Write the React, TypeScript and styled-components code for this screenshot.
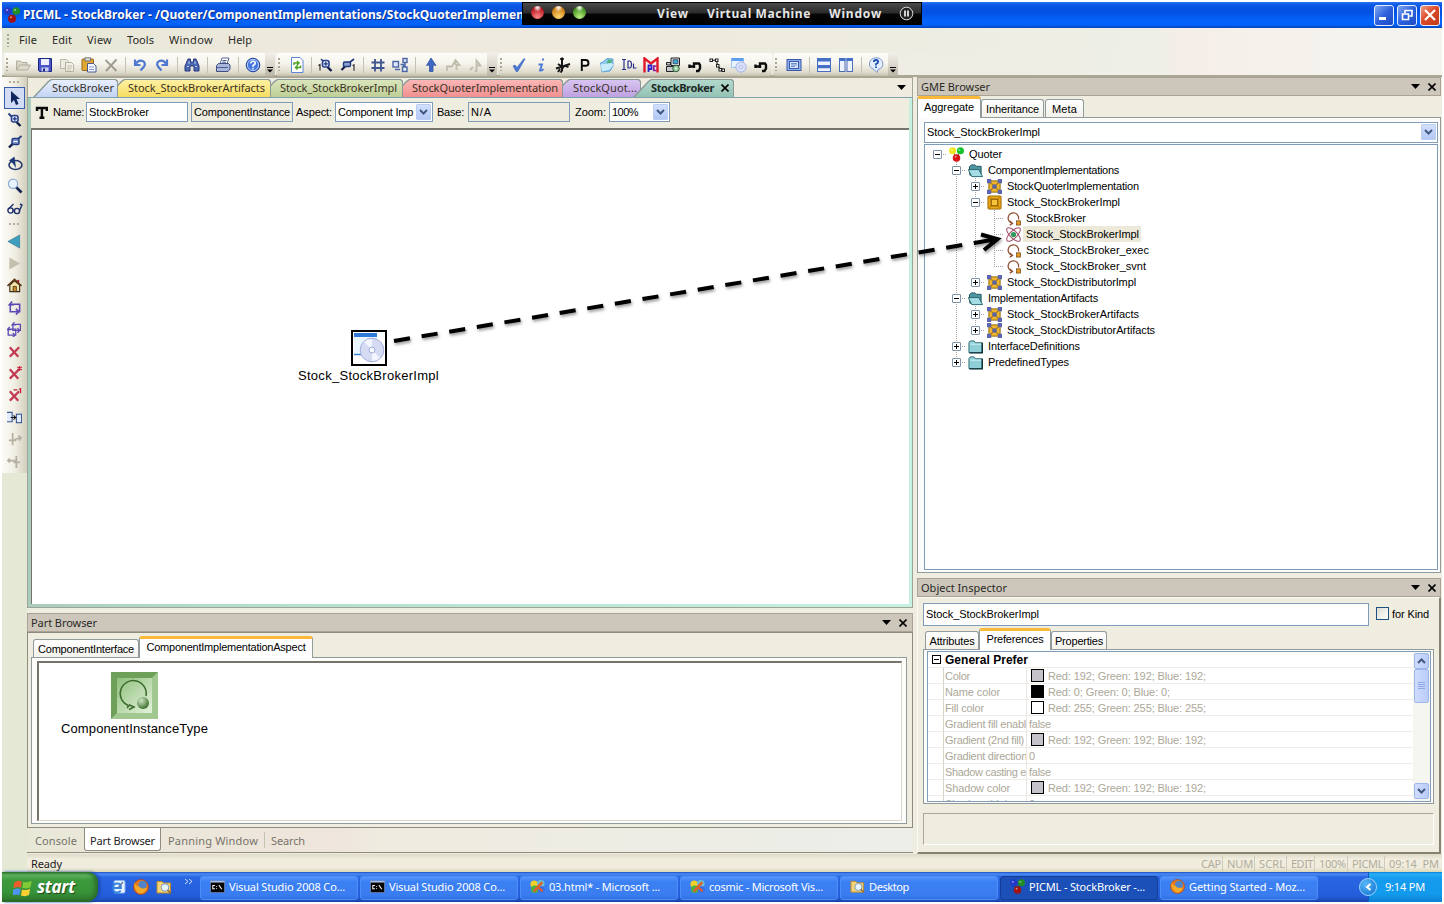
import React, { useLayoutEffect, useRef } from 'react';
import styled, { createGlobalStyle, css } from 'styled-components';

const tahoma = `"Noto Sans", "Open Sans", sans-serif`;
const sans = `"Liberation Sans", Arial, sans-serif`;

const Global = createGlobalStyle`
  * { box-sizing: border-box; }
  body { margin: 0; background: #fff; font: 11px ${tahoma}; color: #1a1a1a; }
  svg { display: block; flex: none; }
`;

/* ---------- text ---------- */

const LabelSpan = styled.span<{ $font?: string; $size?: number; $bold?: boolean; $color?: string }>`
  display: inline-block;
  flex: none;
  white-space: pre;
  line-height: 16px;
  font-family: ${p => p.$font || tahoma};
  font-size: ${p => p.$size || 11}px;
  font-weight: ${p => (p.$bold ? 700 : 400)};
  color: ${p => p.$color || 'inherit'};
`;

type LabelProps = { w?: number; font?: string; size?: number; bold?: boolean; color?: string; children: string };

function Label({ w, font, size, bold, color, children }: LabelProps) {
  const ref = useRef<HTMLSpanElement>(null);
  useLayoutEffect(() => {
    const el = ref.current;
    if (!el || !w) return;
    el.style.letterSpacing = '0px';
    const natural = el.getBoundingClientRect().width;
    el.style.letterSpacing = `${(w - natural) / children.length}px`;
  }, [w, children]);
  return (
    <LabelSpan ref={ref} $font={font} $size={size} $bold={bold} $color={color}>{children}</LabelSpan>
  );
}

const Sys = (p: LabelProps) => <Label font={sans} size={11} color="#000" {...p} />;

/* ---------- icons ---------- */

const zoomGlyph = (plus: boolean) => (
  <>
    <path d="M9.5 10l4 4" stroke="#0f1a45" strokeWidth="2.4" />
    <rect x="4.5" y="3.5" width="6.5" height="6.5" rx="2" fill="#dfe9ff" stroke="#2a3f8a" strokeWidth="1.6" />
    <path d={plus ? 'M5.8 6.8h4M7.8 4.8v4' : 'M5.8 6.8h4'} stroke="#20397f" strokeWidth="1.3" />
  </>
);
const cross = (c: string) => <path d="M3 3.5l9 10M13 3.5L3 13.5" stroke={c} strokeWidth="2.4" />;
const trio = (a: string, b: string, c: string) => (
  <>
    <path d="M3 3l5 8 5-8" stroke="#333" fill="none" />
    <circle cx="3.8" cy="4" r="3.8" fill={a} /><circle cx="12.2" cy="4" r="3.8" fill={b} />
    <circle cx="8" cy="11.8" r="4" fill={c} />
    <circle cx="3" cy="3" r="1" fill="#fff8" /><circle cx="11" cy="3" r="1" fill="#fff8" /><circle cx="7" cy="10.3" r="1" fill="#fff8" />
  </>
);
const loop = <path d="M5 4.5h8.5v8H10M11 12.5H3.5V5M5.5 1.5l-3 3.5h5M9.5 9.5l3 3-3 3" fill="none" stroke="#5a47b4" strokeWidth="1.7" />;

const ICONS: Record<string, React.ReactNode> = {
  app: trio('#2338c8', '#1f8f25', '#a01212'),
  quoter: trio('#f1e522', '#18c22f', '#d81414'),
  open: <path d="M1.5 13V4h4l1.5 1.5H12V8M1.5 13L4.5 8H15.5L12.5 13z" fill="#dcd9cb" stroke="#b1ad9c" />,
  save: <><path d="M1.5 1.5h13v13h-12l-1-1z" fill="#4b55c8" stroke="#1c2781" /><path d="M4 2h8v6H4z" fill="#eef1fd" /><path d="M4.5 10.5h7v4h-7z" fill="#c6cdf4" /><path d="M6 11.5h2v3H6z" fill="#1c2781" /></>,
  copy: <><path d="M1.5 2.5h6l2 2v7h-8z" fill="#eceade" stroke="#bcb8a7" /><path d="M6.5 5.5h6l2 2v7h-8z" fill="#f1efe6" stroke="#b5b19f" /><path d="M8 9h5M8 11h5M8 13h4" stroke="#c5c1b0" /></>,
  paste: <><rect x="1" y="2" width="11.5" height="11.5" rx="1" fill="#e2a832" stroke="#93661a" /><rect x="4" y=".8" width="5.5" height="3.2" fill="#d8d8d8" stroke="#666" strokeWidth=".8" /><path d="M6.5 6.5h6l2.5 2.5v6h-8.5z" fill="#f6f8ff" stroke="#4b5c94" /><path d="M8 10h5M8 12.5h5" stroke="#8b9ac9" /></>,
  del: <path d="M2.5 3l11 11M13.5 2.5L3 14" stroke="#9f9c8e" strokeWidth="1.9" />,
  undo: <path d="M3 2.5v5.5h5.5M3.5 7.5Q6 3 10 3.8Q14.5 5.5 12 9.5L8.5 13.5" fill="none" stroke="#4f78d0" strokeWidth="2.2" />,
  redo: <path d="M13 2.5v5.5H7.500M12.5 7.5Q10 3 6 3.8Q1.5 5.5 4 9.5L7.5 13.5" fill="none" stroke="#4f78d0" strokeWidth="2.2" />,
  find: <><path d="M4 2h2.5v3h3V2H12l3 7v5h-5V9H6v5H1V9z" fill="#4a68b4" stroke="#26397a" /><path d="M3 9.5h2M11 9.5h2M5 4v3M11 4v3" stroke="#b9caef" /></>,
  print: <><path d="M5 7l2-6h7l-2 6" fill="#fff" stroke="#56669a" /><path d="M1.5 8.5l2-2h10l1.5 1.5v4l-2 2.5h-11.5z" fill="#a9b6dc" stroke="#3f4e80" /><path d="M2 10.5h11M7.5 3.5h4M7 5.2h4" stroke="#4a5b92" /></>,
  help: <><circle cx="8" cy="8" r="6.8" fill="#4578de" stroke="#1e4396" /><circle cx="8" cy="8" r="5.6" fill="none" stroke="#b9d0ff" /><path d="M5.8 6.5Q6 4.3 8 4.3t2.2 1.9Q10.2 7.5 8 8.5V9.7M8 10.8v1.5" fill="none" stroke="#fff" strokeWidth="1.6" /></>,
  refresh: <><path d="M2.5.5h8.5l3 3v12H2.5z" fill="#fff" stroke="#5d86d6" /><path d="M5 8V6h4M8 4l2 2-2 2M11.5 8.5v2H7M8.5 8.5l-2 2 2 2" fill="none" stroke="#4ea524" strokeWidth="1.5" /></>,
  zin1: <><path d="M.5 8.5L2 7.5v6" fill="none" stroke="#222" strokeWidth="1.1" /><path d="M3 2l2 2" stroke="#20397f" strokeWidth="1.6" />{zoomGlyph(true)}</>,
  zout1: <><path d="M1.5 13l4-4" stroke="#0f1a45" strokeWidth="2.2" /><rect x="3.5" y="5" width="7" height="4.5" rx="1" fill="#8fa0d0" stroke="#20397f" strokeWidth="1.4" /><path d="M9.5 5.5L14 2" stroke="#20397f" strokeWidth="1.6" /><path d="M12.5 8.5L14 7.8v6" fill="none" stroke="#222" strokeWidth="1.1" /></>,
  hash: <path d="M5 2v12.5M11 2v12.5M1.5 5.5h13M1.5 11h13" stroke="#3f5590" strokeWidth="1.8" />,
  tree: <g fill="#dfe7fa" stroke="#4a64a6" strokeWidth="1.4"><rect x="1" y="4.5" width="5.5" height="5.5" /><rect x="11" y="1.5" width="4" height="4" /><rect x="10.5" y="10" width="4.5" height="4.5" /><path d="M3 12.5h5M8.5 7.5h3v2.5M13 6v4" fill="none" /></g>,
  up: <path d="M8 1l5 7.5-3-.5v6.5H6.500V8l-3 .5z" fill="#3f67c6" stroke="#274793" strokeWidth=".7" />,
  grey1: <path d="M2 14v-4.5h5l3.5-6.5 4 5h-3v5M10.5 3v5" fill="none" stroke="#c1bdac" strokeWidth="1.8" />,
  grey2: <path d="M3 13l3-3M8 14h1.5V3.5l4 5h-3" fill="none" stroke="#c1bdac" strokeWidth="1.8" />,
  check: <path d="M2 9l2-1 2 2.5L13 1.5l1 .5L6.8 14.5H5z" fill="#4a78d4" stroke="#3058b5" strokeWidth=".5" />,
  info: <path d="M10 1.5v2M5.5 7.5H9L7 13.5q2 .5 3.5-1.5" fill="none" stroke="#4a78d4" strokeWidth="1.9" />,
  axis: <><path d="M7 .5v13M1 11.5l5-1.5 9-3M3 7l6 4M9.5 8.5l4 1.5M5 12l-2 3M7.5 13l-2 2.5" stroke="#161616" strokeWidth="2" /><path d="M5 2h4" stroke="#161616" strokeWidth="1.6" /></>,
  p: <path d="M4.8 14V3h3.7q3 0 3 2.9t-3 2.9H5" fill="none" stroke="#0a0a0a" strokeWidth="1.9" />,
  folderGlobe: <><path d="M1.5 6l3-1.5L8 1.5l6 .5v7l-3 5-8 1z" fill="#8fc8f0" stroke="#4e97d0" strokeWidth=".8" /><path d="M9 2.5l4 .5-.5 3-5 1z" fill="#4fb47a" /><path d="M1.5 7.5l11-1.5 2 2-4 4.5-7.5 2z" fill="#c8ecfb" /></>,
  idl: <path d="M1 2.5h4M3 2.5v10M1 12.5h4M7 4v7h1.5q2 0 2-3.5T8.5 4zM12.5 6.5V11H15.5" fill="none" stroke="#2a2f8a" strokeWidth="1.2" />,
  mpc: <><path d="M1.5 15.5V1.5L8 6.5l6.5-5v14" fill="none" stroke="#e01828" strokeWidth="2.4" /><path d="M5.5 15V8.5h3v3.5H6" fill="none" stroke="#3020c8" strokeWidth="1.8" /><path d="M13.5 9h-2.700v4.5h2.700" fill="none" stroke="#8a1a9a" strokeWidth="1.6" /></>,
  pc: <><path d="M6 1h8.5v7.5H6z" fill="#dfe6ee" stroke="#222" /><path d="M8 2.7h5v4H8z" fill="#3fa6d8" stroke="#223" strokeWidth=".6" /><path d="M1.5 9.5h7v5h-7zM1.5 5.5h4v2.5h-4z" fill="#c4c9cf" stroke="#222" /><circle cx="11" cy="11.5" r="3.3" fill="#93cf9c" stroke="#3c5d42" /><circle cx="11" cy="11.5" r="1" fill="#fff" /></>,
  hook: <path d="M2.5 7.5v3.5M2 9.5h4.5M7 11V6.5h5l1 1.5v3.5l-1.5 2.5H9" stroke="#0c0c0c" strokeWidth="2.4" fill="none" />,
  nodes: <><path d="M2.5 3.5l5-.5 1 6 3 3h3" fill="none" stroke="#222" strokeWidth="1.2" /><g fill="#fff" stroke="#222"><rect x="1" y="2" width="2.5" height="2.5" /><rect x="6.5" y="2" width="2.5" height="2.5" /><rect x="7.5" y="7.5" width="2.5" height="2.5" /><rect x="10" y="11.5" width="2.5" height="2.5" /><rect x="13" y="12" width="2.5" height="2.5" /></g></>,
  disc: <><path d="M.5 1.5h12v9H.5z" fill="#eaf4ff" stroke="#9cc5f2" /><path d="M.5 1h12v3H.5z" fill="#5c9ff0" /><circle cx="10" cy="10" r="5.2" fill="#d8dffa" stroke="#a9b7e6" /><circle cx="10" cy="10" r="1.5" fill="#fff" stroke="#a9b7e6" /></>,
  full: <><rect x="1" y="2.5" width="14" height="11" fill="#8fb0ee" stroke="#3a5aa8" /><rect x="3.5" y="4.5" width="9" height="7" fill="#dbe6fd" stroke="#3a5aa8" /><path d="M5 6.5h6M5 8h6M5 9.5h4" stroke="#5378c4" strokeWidth=".8" /></>,
  hsplit: <><rect x="1.5" y="1.5" width="13" height="13" fill="#eef3fe" stroke="#4a6cbc" /><path d="M1 1h14v3.5H1zM1 8h14v3.2H1z" fill="#4470c8" /></>,
  vsplit: <><rect x="1.5" y="1.5" width="5.5" height="13" fill="#eef3fe" stroke="#4a6cbc" /><rect x="9" y="1.5" width="5.5" height="13" fill="#eef3fe" stroke="#4a6cbc" /><path d="M1 1h6.5v3H1zM8.5 1H15v3H8.5z" fill="#4470c8" /></>,
  about: <><path d="M8 .8a7 6 0 0 1 2 11.700L9 15.5 6 12.4A7 6 0 0 1 8 .8z" fill="#e4eefe" stroke="#7b98cd" /><path d="M5.8 5Q6 3 8 3t2.2 1.8Q10.2 6 8 7V8.5M8 9.5V11" fill="none" stroke="#1a4fb0" strokeWidth="1.8" /></>,
  pointer: <path d="M4 1l9 8H9.5l2 5-2.5 1-2-5L4 13z" fill="#11255f" />,
  zin: <><path d="M1.5 1.5l3 3" stroke="#20397f" strokeWidth="1.8" />{zoomGlyph(true)}</>,
  zout: <><path d="M2 13.5l4-4" stroke="#0f1a45" strokeWidth="2.4" /><rect x="5" y="4.5" width="7" height="6" rx="1.5" fill="#7d93cf" stroke="#20397f" strokeWidth="1.4" /><path d="M6.5 7.5h4" stroke="#fff" /><path d="M11 5l3.5-3" stroke="#20397f" strokeWidth="1.8" /></>,
  orbit: <><ellipse cx="8.5" cy="9" rx="6.5" ry="4.5" fill="none" stroke="#27386e" strokeWidth="1.6" /><path d="M2 4.5L7.5.5 9 12 5.5 7z" fill="#1b3a78" /></>,
  lens: <><path d="M9 9l5.5 5.5" stroke="#14224f" strokeWidth="2.6" /><circle cx="6" cy="5.8" r="4.6" fill="#e9f3ff" stroke="#8fa9d2" strokeWidth="1.2" /></>,
  glasses: <g fill="none" stroke="#1c2d6b" strokeWidth="1.4"><circle cx="3.5" cy="10.5" r="2.6" /><circle cx="10" cy="11" r="2.6" /><path d="M1.5 9L6.5 4M12.5 10.5L15 5l-2-1M6 10.5h1.5" /></g>,
  back: <path d="M1 8l12.5-7v14z" fill="#3f9dbd" stroke="#2b6f8a" strokeWidth=".6" />,
  fwd: <path d="M2.5 1.5L14 8 2.5 14.5z" fill="#c3c0ae" />,
  home: <><path d="M3 7.5v7h10.5v-7L8 3z" fill="#f1e2a8" stroke="#3a2a18" strokeWidth="1.2" /><path d="M.5 8.5L8 1.5l7.5 7" fill="none" stroke="#5b3a17" strokeWidth="1.8" /><path d="M12 2v3" stroke="#a01c1c" strokeWidth="2" /><path d="M6.5 9h3.5v5.5H6.5z" fill="#c7872b" stroke="#3a2a18" strokeWidth=".8" /></>,
  loop,
  loop2: <><g transform="translate(3.5 -1) scale(.8)">{loop}</g><g transform="translate(-1.5 4) scale(.8)">{loop}</g></>,
  x: cross('#c23a52'),
  xstar: <>{cross('#c23a52')}<path d="M13.5 0v5M11 1l5 3M16 1l-5 3" stroke="#c8203c" strokeWidth="1.2" /></>,
  xone: <>{cross('#c23a52')}<path d="M7 2h4M13 1.5L14.5.5v5" stroke="#c8203c" fill="none" strokeWidth="1.3" /></>,
  link: <g fill="#e3ecfc" stroke="#3c5a94" strokeWidth="1.2"><path d="M0 2.5h5.5v10H0" /><rect x="10" y="4.5" width="5.5" height="9" /><path d="M4 8h5M7 5.8L9.2 8 7 10.2" fill="none" stroke="#111" /></g>,
  g3: <path d="M6 1v13M2 9h8M8 8l7-2M12 4l3 2-2 3" fill="none" stroke="#b4b1a2" strokeWidth="1.9" />,
  g4: <path d="M10 2v13M7 9h7M1 7h8M3 5L1 7l2 2" fill="none" stroke="#b4b1a2" strokeWidth="1.9" />,
  folderOpen: <><path d="M2 13L1.5 4l2-2h4l1.5 1.5h5V12z" fill="#4f96a2" stroke="#1f5660" /><path d="M.3 7h11.2l4 7.5H4z" fill="#a4dde4" stroke="#24626c" /></>,
  folder: <><path d="M1 4l1.5-2h4L8 4h7v10.5H1z" fill="#8fd0d8" stroke="#2a6670" /><path d="M15.3 4v10.8H1.500" fill="none" stroke="#0d3038" strokeWidth="1.5" /><path d="M2 5.5h12" stroke="#d4f5f8" /></>,
  asm: <><rect x="2" y="2" width="12" height="12" fill="#efb52c" stroke="#8d6511" /><path d="M3 3l10 10M13 3L3 13" stroke="#a67a1c" strokeWidth="1.2" /><circle cx="8" cy="8" r="2.5" fill="#5a62a8" /><g fill="#5c65b0"><rect x="0" y="0" width="4.5" height="4.5" /><rect x="11.5" y="0" width="4.5" height="4.5" /><rect x="0" y="11.5" width="4.5" height="4.5" /><rect x="11.5" y="11.5" width="4.5" height="4.5" /></g></>,
  box: <><rect x="1" y="1" width="14" height="14" rx="1" fill="#eba713" stroke="#94650a" /><path d="M1.5 1.5l4 4M14.5 1.5l-4 4M1.5 14.5l4-4M14.5 14.5l-4-4" stroke="#b57c0c" /><rect x="4.5" y="4.5" width="7" height="7" fill="#f8c33a" stroke="#8a5c08" strokeWidth="1.3" /></>,
  inst: <><path d="M6.5 13A5.6 5.6 0 1 1 13.3 9M4 10.5l3 2.7-3 2" fill="none" stroke="#8a4a2a" strokeWidth="1.3" /><rect x="11.3" y="10.5" width="4.2" height="4.5" fill="#e8981a" stroke="#5e3a08" strokeWidth=".7" /></>,
  atom: <><g fill="none" stroke="#a0506a" strokeWidth="1.1"><ellipse cx="8" cy="8" rx="9.5" ry="3.8" transform="rotate(45 8 8)" /><ellipse cx="8" cy="8" rx="9.5" ry="3.8" transform="rotate(-45 8 8)" /></g><circle cx="8" cy="8" r="2.8" fill="#2e9a5c" /></>,
  ie: <><rect x="4" y="1.5" width="11" height="12.5" rx="1.5" fill="#eaf3ff" stroke="#8ab4f0" /><path d="M3 9h8q0-4.5-4-4.5T3 9t4 4.5q2.5 0 3.7-2" fill="none" stroke="#3384e0" strokeWidth="1.8" /><path d="M8 9l5-6" stroke="#5a7aa8" strokeWidth="1.3" /></>,
  fox: <><circle cx="8" cy="8" r="7.5" fill="#e8781c" stroke="#a9400a" strokeWidth=".6" /><circle cx="9.5" cy="6" r="4.2" fill="#4f84c8" /><path d="M1 3Q3 8 6 7 7 10.5 14 9 12 14 8 14.5 1.5 14 1 3z" fill="#f4a929" /></>,
  search: <><path d="M1 2.5h5l1.5 1.5h7V14H1z" fill="#f4d379" stroke="#b98a2b" /><circle cx="9" cy="8.5" r="3.8" fill="#e8f5ff" stroke="#7898b8" /><path d="M11.5 11l3.5 3.5" stroke="#8b6a3a" strokeWidth="1.6" /></>,
  cmd: <><rect x=".5" y="2" width="15" height="12.5" fill="#050505" stroke="#8fa2c8" strokeWidth=".6" /><path d="M.5 2h15v1.8H.5z" fill="#a9bfe8" /><path d="M5.2 7H3v3.5h2.2M7 7.5v.8M7 9.8v.8M9.5 6.5l3 4.5" stroke="#fff" fill="none" strokeWidth="1.1" /></>,
  vs: <><circle cx="4.5" cy="5.5" r="4" fill="#f2cf2a" /><circle cx="11.5" cy="5" r="4" fill="#6cc0d4" /><circle cx="5" cy="11" r="4" fill="#4cb045" /><circle cx="12" cy="11" r="3.5" fill="#3c6ee4" /><path d="M3 12.5L12 2.5l2 2-9 9.500zM8 7l6 5-1 2-6-5z" fill="#e0602a" /></>,
  windows: <g transform="skewY(-5) translate(0 1)"><path d="M1 3.5Q4 1.5 7 3.2L6.3 8Q3.5 6.5.3 8z" fill="#ee5a2a" /><path d="M8.2 3.5Q11 5 15 3.3L14 8.5Q11 9.8 7.3 8.2z" fill="#7fcb35" /><path d="M.2 9.2Q3.2 7.8 6 9.2L5.2 14Q2.5 12.5-.8 14z" fill="#4e95f2" /><path d="M7.2 9.6Q10.5 11 13.7 9.6L12.8 14.6Q9.5 16 6.4 14.3z" fill="#f9cf33" /></g>,
  bigT: <path d="M2.5 6V2.500h12V6M8.5 3v12M5.5 14.5h6" fill="none" stroke="#0a0a0a" strokeWidth="3" />,
};

const Icon = ({ name, size = 16 }: { name: string; size?: number }) => (
  <svg width={size} height={size} viewBox="0 0 16 16">{ICONS[name]}</svg>
);

/* ---------- window frame ---------- */

const Desktop = styled.div`
  position: relative;
  width: 1444px;
  height: 904px;
  padding: 2px;
  background: #fff;
  overflow: hidden;
`;
const Win = styled.div`
  width: 1440px;
  height: 900px;
  display: flex;
  flex-direction: column;
  background: #efece0;
`;
const TitleBar = styled.div`
  position: relative;
  height: 26px;
  flex: none;
  display: flex;
  align-items: center;
  padding: 0 2px 0 2px;
  gap: 3px;
  color: #fff;
  background: linear-gradient(#2a74ee 0, #0b58e6 3px, #0450e0 9px, #0463fb 19px, #0461f8 23px, #0344b8 26px);
  text-shadow: 1px 1px 0 #10308a;
`;
const Spring = styled.div`flex: 1;`;
const WinButton = styled.div<{ $close?: boolean }>`
  width: 20px;
  height: 21px;
  border: 1px solid #e6eefc;
  border-radius: 3px;
  display: flex;
  align-items: center;
  justify-content: center;
  background: ${p => (p.$close ? 'linear-gradient(135deg,#f0a08a,#dc4a28 45%,#c03a1a)' : 'linear-gradient(135deg,#82a9f4,#2c60dc 50%,#1c4cc4)')};
`;
const MacBar = styled.div`
  position: absolute;
  left: 520px;
  top: 0;
  width: 400px;
  height: 23px;
  display: flex;
  align-items: center;
  padding: 0 7px 0 8px;
  border: 1px solid #000;
  background: linear-gradient(#4a4a4a 0, #2b2b2b 10px, #060606 11px, #000 100%);
  text-shadow: none;
`;
const Light = styled.div<{ $c: string; $d: string }>`
  width: 13px;
  height: 13px;
  margin: 0 8px 2px 0;
  border-radius: 50%;
  background: radial-gradient(circle at 50% 12%, #fff 0, #fff8 16%, transparent 32%),
    radial-gradient(circle at 50% 85%, ${p => p.$c}, ${p => p.$d} 75%);
`;
const MacMenus = styled.div`
  display: flex;
  gap: 18px;
  margin: 0 auto 0 62px;
  padding-left: 1px;
`;

const MenuBar = styled.div`
  height: 24px;
  flex: none;
  display: flex;
  align-items: center;
  padding-left: 3px;
  color: #2b2a28;
  background: linear-gradient(90deg, #e6e8d6, #efe9de 24%, #eeebde 50%, #eeefe7 80%, #f5eee8 82%, #f5f3ee 93%);
`;
const Grip = styled.div<{ $w: number }>`
  width: ${p => p.$w}px;
  height: 13px;
  flex: none;
  background: repeating-linear-gradient(#aaa692 0 2px, transparent 2px 4px) 2px 0 / 2px 100% no-repeat;
`;
const MenuItem = styled.div<{ $gap: number }>`margin-left: ${p => p.$gap}px;`;

const ToolRow = styled.div`
  height: 25px;
  flex: none;
  display: flex;
  background: linear-gradient(90deg, #efede3 60%, #eeefe7 80%, #f5eee8 82%, #f5f3ee 93%);
  border-bottom: 2px solid #aaa795;
  padding: 1px 0 0 2px;
`;
const Band = styled.div`
  display: flex;
  align-items: center;
  height: 23px;
  border-radius: 3px;
  background: linear-gradient(#fdfcf9, #f6f4ec 45%, #dedacb 85%, #c3bfad);
  margin-right: 1px;
`;
const Cell = styled.div`
  width: 22px;
  height: 22px;
  flex: none;
  display: flex;
  align-items: center;
  justify-content: center;
`;
const Sep = styled.div<{ $w: number }>`
  width: ${p => p.$w}px;
  height: 16px;
  flex: none;
  background: linear-gradient(#c6c2b2, #c6c2b2) center / 1px 100% no-repeat;
`;
const Overflow = styled.div`
  width: 10px;
  height: 23px;
  margin-left: 1px;
  display: flex;
  align-items: flex-end;
  justify-content: center;
  padding-bottom: 3px;
  border-radius: 0 3px 3px 0;
  background: linear-gradient(#f1efe8, #dad7cc 50%, #b9b5a5);
`;
const Chevron = () => (
  <Overflow><svg width="6" height="6"><path d="M0 .5h6" stroke="#000" /><path d="M0 2.5h6l-3 3z" /></svg></Overflow>
);

const BANDS: { grip: number; items: (string | number)[]; more?: boolean }[] = [
  { grip: 8, more: true, items: ['open', 'save', 'copy', 'paste', 'del', 7, 'undo', 'redo', 8, 'find', 9, 'print', 8, 'help'] },
  { grip: 10, more: true, items: ['refresh', 7, 'zin1', 'zout1', 8, 'hash', 'tree', 9, 'up', 'grey1', 'grey2'] },
  { grip: 10, items: ['check', 'info', 'axis', 'p', 'folderGlobe', 'idl', 'mpc', 'pc', 'hook', 'nodes', 'disc', 'hook'] },
  { grip: 10, more: true, items: ['full', 8, 'hsplit', 'vsplit', 8, 'about'] },
];

/* ---------- body ---------- */

const Body = styled.div`
  flex: 1;
  min-height: 0;
  display: flex;
`;
const SideBar = styled.div`
  width: 25px;
  flex: none;
  background: #e5e8d5;
`;
const SideStrip = styled.div`
  display: flex;
  flex-direction: column;
  align-items: center;
  height: 396px;
  background: linear-gradient(90deg, #fcfbf7, #f1efe4 50%, #d3cfbd);
`;
const SideGrip = styled.div<{ $h: number }>`
  width: 11px;
  height: ${p => p.$h}px;
  background: repeating-linear-gradient(90deg, #b3af9c 0 2px, transparent 2px 4px) 0 4px / 100% 2px no-repeat;
`;
const SideCell = styled(Cell)<{ $on?: boolean }>`
  ${p => p.$on && css`
    width: 21px;
    background: #d2ddf5;
    border: 1px solid #3a5fae;
  `}
`;
const SIDE1 = ['pointer', 'zin', 'zout', 'orbit', 'lens', 'glasses'];
const SIDE2 = ['back', 'fwd', 'home', 'loop', 'loop2', 'x', 'xstar', 'xone', 'link', 'g3', 'g4'];

const Main = styled.div`
  width: 886px;
  margin-right: 4px;
  flex: none;
  display: flex;
  flex-direction: column;
`;
const DocTabs = styled.div`
  height: 20px;
  flex: none;
  display: flex;
  align-items: flex-end;
  padding-left: 5px;
  border: 1px solid #a9a595;
  border-bottom: 0;
  background: #efecdf;
`;
const DocTab = styled.div<{ $w: number; $c: string; $c2: string; $z: number; $over: number; $pad: number }>`
  position: relative;
  z-index: ${p => p.$z};
  width: ${p => p.$w}px;
  height: 18px;
  flex: none;
  margin-left: ${p => -p.$over}px;
  padding-left: ${p => p.$pad}px;
  display: flex;
  align-items: center;
  color: #333;
  background: #8a9a98;
  clip-path: polygon(0 100%, 15px 2px, 18px 0, calc(100% - 2px) 0, 100% 2px, 100% 100%);
  &::before {
    content: '';
    position: absolute;
    inset: 0;
    background: linear-gradient(${p => p.$c}, ${p => p.$c2});
    clip-path: polygon(2px 100%, 16px 3px, 19px 1px, calc(100% - 3px) 1px, calc(100% - 1px) 3px, calc(100% - 1px) 100%);
  }
  > * { position: relative; }
`;
const TabClose = styled.div`margin-left: 7px;`;
const DocMenu = styled.div`
  margin-left: auto;
  padding: 0 6px 7px 0;
`;
const Doc = styled.div`
  height: 511px;
  flex: none;
  display: flex;
  flex-direction: column;
  padding: 0 3px 3px;
  border: 1px solid #9da596;
  border-top-color: #7fa3ae;
  background: linear-gradient(90deg, #a9cdbd, #b4dccb 20%, #c6f0e2);
`;
const NameRow = styled.div`
  height: 30px;
  flex: none;
  display: flex;
  align-items: center;
  padding: 0 0 2px 4px;
  background: #efece0;
`;
const Field = styled.div<{ $w: number; $h?: number; $ml?: number; $ro?: boolean }>`
  width: ${p => p.$w}px;
  height: ${p => p.$h || 20}px;
  margin-left: ${p => p.$ml || 0}px;
  flex: none;
  display: flex;
  align-items: center;
  padding-left: 2px;
  padding-bottom: ${p => (p.$h ? 1 : 0)}px;
  border: 1px solid #7f9db9;
  background: ${p => (p.$ro ? '#eeebdf' : '#fff')};
  overflow: hidden;
`;
const Drop = styled.div`
  width: 15px;
  height: calc(100% - 2px);
  margin: 0 1px 0 auto;
  display: flex;
  align-items: center;
  justify-content: center;
  border-radius: 1px;
  background: linear-gradient(#d3e0fd, #b3c8f5);
  border: 1px solid #bccdf3;
`;
const Vee = ({ up }: { up?: boolean }) => (
  <svg width="9" height="6"><path d={up ? 'M1 5l3.5-3.5L8 5' : 'M1 1l3.5 3.5L8 1'} fill="none" stroke="#41587f" strokeWidth="2" /></svg>
);
const Gap = styled.div<{ $w: number }>`width: ${p => p.$w}px; flex: none;`;
const Canvas = styled.div`
  flex: 1;
  position: relative;
  background: #fff;
  border: 1px solid #77756b;
  border-width: 2px 0 0 1px;
`;
const Node = styled.div<{ $x: number; $y: number }>`
  position: absolute;
  left: ${p => p.$x}px;
  top: ${p => p.$y}px;
  display: flex;
  flex-direction: column;
  align-items: center;
  gap: 2px;
`;

/* ---------- dock panels ---------- */

const Caption = styled.div<{ $pr: number }>`
  height: 19px;
  flex: none;
  display: flex;
  align-items: center;
  gap: 8px;
  padding: 0 ${p => p.$pr}px 0 3px;
  border: 1px solid #aaa395;
  background: #cdc7bb;
  color: #2a2926;
`;
const Down = () => <svg width="9" height="5"><path d="M0 0h9L4.5 5z" /></svg>;
const Close = () => (
  <svg width="8" height="8" viewBox="0 0 8 8"><path d="M.5.5l7 7M7.5.5l-7 7" stroke="#000" strokeWidth="1.6" /></svg>
);
const CaptionBar = ({ text, w, pr = 4 }: { text: string; w: number; pr?: number }) => (
  <Caption $pr={pr}><Label w={w}>{text}</Label><Spring /><Down /><Close /></Caption>
);

const TabRow = styled.div<{ $pl: number }>`
  display: flex;
  align-items: flex-end;
  height: 21px;
  flex: none;
  padding-left: ${p => p.$pl}px;
`;
const PageTab = styled.div<{ $w: number; $on?: boolean }>`
  width: ${p => p.$w}px;
  height: ${p => (p.$on ? 22 : 18)}px;
  flex: none;
  display: flex;
  justify-content: center;
  align-items: center;
  border: 1px solid #919b9c;
  border-bottom: 0;
  border-radius: 3px 3px 0 0;
  background: linear-gradient(#fff, #f3f2ec);
  ${p => p.$on && css`
    position: relative;
    margin-bottom: -1px;
    padding-bottom: 3px;
    border-top: 3px solid #fbb93a;
    background: #fff;
  `}
`;

const PartWrap = styled.div`
  display: flex;
  flex-direction: column;
  margin-top: 5px;
`;
const PartBody = styled.div`
  height: 196px;
  flex: none;
  display: flex;
  flex-direction: column;
  padding: 3px 5px 3px 3px;
  border: 1px solid #8f8c7d;
  background: #efece0;
`;
const PartPage = styled.div`
  flex: 1;
  display: flex;
  padding: 3px 4px 2px 5px;
  border: 1px solid #919b9c;
  background: #fcfcfa;
`;
const PartList = styled.div`
  flex: 1;
  position: relative;
  background: #fff;
  border: 2px solid #77756b;
  border-right: 1px solid #d8d5c9;
  border-bottom: 1px solid #d8d5c9;
`;
const BottomTabs = styled.div`
  height: 25px;
  flex: none;
  display: flex;
  align-items: flex-start;
  padding-left: 8px;
  color: #76736a;
  border-bottom: 1px solid #8f8c7d;
  background: linear-gradient(90deg, #e8e8d8, #efe5dc 35%, #eeebdf 40%, #edeeea);
`;
const BottomTab = styled.div<{ $on?: boolean }>`
  height: 23px;
  display: flex;
  align-items: center;
  padding-top: 2px;
  ${p => p.$on && css`
    margin: 0 7px 0 7px;
    padding: 3px 5px 0;
    background: #fff;
    color: #222;
    border: 1px solid #8f8c7d;
    border-top: 0;
    border-radius: 0 0 3px 3px;
  `}
`;
const TabSep = styled(Sep)`margin-top: 4px;`;

const Right = styled.div`
  width: 524px;
  flex: none;
  display: flex;
  flex-direction: column;
`;
const BrowserPage = styled.div`
  height: 456px;
  flex: none;
  display: flex;
  flex-direction: column;
  padding: 4px 2px 2px 6px;
  border: 1px solid #919b9c;
  background: #fcfcfa;
  margin-bottom: 5px;
`;
const Tree = styled.div`
  flex: 1;
  margin-top: 1px;
  padding: 1px 0 0 3px;
  background: #fff;
  border: 1px solid #7f9db9;
`;
const TreeRow = styled.div`
  height: 16px;
  display: flex;
  align-items: center;
`;
const dots = 'repeating-linear-gradient(#a5a5a5 0 1px, transparent 1px 2px)';
const hdots = 'repeating-linear-gradient(90deg, #a5a5a5 0 1px, transparent 1px 2px)';
const Guide = styled.div<{ $v?: 'full' | 'half' | 'none'; $h?: boolean }>`
  width: 19px;
  height: 16px;
  flex: none;
  display: flex;
  align-items: center;
  justify-content: center;
  background-repeat: no-repeat;
  background-image: ${p => (p.$v === 'none' || !p.$v ? 'none' : dots)}, ${p => (p.$h ? hdots : 'none')};
  background-size: 1px ${p => (p.$v === 'half' ? '8px' : '16px')}, 10px 1px;
  background-position: 9px 0, 9px 8px;
`;
const Expander = styled.div`
  width: 9px;
  height: 9px;
  border: 1px solid #7f93a8;
  border-radius: 1px;
  background: #fff;
  display: flex;
  align-items: center;
  justify-content: center;
`;
const PlusMinus = ({ plus }: { plus?: boolean }) => (
  <Expander><svg width="5" height="5"><path d={plus ? 'M0 2.5h5M2.5 0v5' : 'M0 2.5h5'} stroke="#000" /></svg></Expander>
);
const TreeText = styled.div<{ $sel?: boolean }>`
  height: 16px;
  padding: 0 2px 0 3px;
  display: flex;
  background: ${p => (p.$sel ? '#ece9d8' : 'transparent')};
`;

type N = { t: string; w: number; icon: string; lines: string; exp?: '+' | '-'; sel?: boolean };
/* `lines`: one letter for each guide column: s = space, f = passing line, t = branch, e = last branch */
const TREE: N[] = [
  { t: 'Quoter', w: 33, icon: 'quoter', lines: 's', exp: '-' },
  { t: 'ComponentImplementations', w: 131, icon: 'folderOpen', lines: 'st', exp: '-' },
  { t: 'StockQuoterImplementation', w: 132, icon: 'asm', lines: 'sft', exp: '+' },
  { t: 'Stock_StockBrokerImpl', w: 113, icon: 'box', lines: 'sft', exp: '-' },
  { t: 'StockBroker', w: 60, icon: 'inst', lines: 'sfft' },
  { t: 'Stock_StockBrokerImpl', w: 113, icon: 'atom', lines: 'sfft', sel: true },
  { t: 'Stock_StockBroker_exec', w: 123, icon: 'inst', lines: 'sfft' },
  { t: 'Stock_StockBroker_svnt', w: 120, icon: 'inst', lines: 'sffe' },
  { t: 'Stock_StockDistributorImpl', w: 129, icon: 'asm', lines: 'sfe', exp: '+' },
  { t: 'ImplementationArtifacts', w: 110, icon: 'folderOpen', lines: 'st', exp: '-' },
  { t: 'Stock_StockBrokerArtifacts', w: 132, icon: 'asm', lines: 'sft', exp: '+' },
  { t: 'Stock_StockDistributorArtifacts', w: 148, icon: 'asm', lines: 'sfe', exp: '+' },
  { t: 'InterfaceDefinitions', w: 92, icon: 'folder', lines: 'st', exp: '+' },
  { t: 'PredefinedTypes', w: 81, icon: 'folder', lines: 'se', exp: '+' },
];

const Inspector = styled.div`
  flex: 1;
  display: flex;
  flex-direction: column;
  padding: 4px 5px 7px 5px;
  border: 1px solid #fbfaf5;
  border-right: 2px solid #85826f;
  border-bottom: 2px solid #85826f;
`;
const InspectorTop = styled.div`
  display: flex;
  height: 24px;
  align-items: center;
  margin-bottom: 2px;
`;
const CheckBox = styled.div`
  width: 13px;
  height: 13px;
  margin: 0 3px 2px 7px;
  border: 1px solid #1d5180;
  background: linear-gradient(135deg, #dcdcd5, #fff);
`;
const GridPage = styled.div`
  height: 155px;
  width: 511px;
  flex: none;
  padding: 1px 2px 1px 3px;
  border: 1px solid #919b9c;
  background: #fcfcfa;
`;
const Grid = styled.div`
  height: 151px;
  display: flex;
  border: 1px solid #7f9db9;
  background: #fff;
  overflow: hidden;
`;
const GridRows = styled.div`flex: 1; height: 149px; overflow: hidden;`;
const GridRow = styled.div<{ $head?: boolean }>`
  height: 16px;
  display: flex;
  > :first-child { width: 15px; }
  > :nth-child(2) {
    width: ${p => (p.$head ? 101 : 84)}px;
    padding-left: ${p => (p.$head ? 2 : 1)}px;
    border-left: ${p => (p.$head ? 0 : 1)}px solid #d8d4cc;
    border-right: ${p => (p.$head ? 0 : 1)}px solid #ece6e0;
  }
  > :nth-child(3) { flex: 1; }
`;
const GridCell = styled.div`
  flex: none;
  height: 16px;
  display: flex;
  align-items: center;
  padding-left: 2px;
  overflow: hidden;
  border-bottom: 1px solid #f0ebe5;
`;
const Swatch = styled.div<{ $c: string }>`
  width: 13px;
  height: 13px;
  margin: 0 4px 0 2px;
  flex: none;
  border: 1px solid #000;
  background: ${p => p.$c};
`;
const HeadBox = styled.div`
  width: 9px;
  height: 9px;
  margin-left: 2px;
  flex: none;
  border: 1px solid #000;
  background: linear-gradient(#000, #000) center / 5px 1px no-repeat;
`;
const ScrollBar = styled.div`
  width: 17px;
  display: flex;
  flex-direction: column;
  align-items: center;
  padding: 1px 0 2px;
  background: #f6f6f0;
`;
const ScrollButton = styled.div<{ $h: number }>`
  width: 15px;
  height: ${p => p.$h}px;
  flex: none;
  display: flex;
  align-items: center;
  justify-content: center;
  border: 1px solid #9fb6ea;
  border-radius: 2px;
  background: linear-gradient(90deg, #cfdcfd, #b9ccf9);
`;
const PROPS: { n: string; nw: number; v: string; vw: number; c?: string }[] = [
  { n: 'Color', nw: 25, v: 'Red: 192; Green: 192; Blue: 192;', vw: 158, c: '#c5c3c8' },
  { n: 'Name color', nw: 55, v: 'Red: 0; Green: 0; Blue: 0;', vw: 122, c: '#000' },
  { n: 'Fill color', nw: 39, v: 'Red: 255; Green: 255; Blue: 255;', vw: 158, c: '#fff' },
  { n: 'Gradient fill enabl', nw: 81, v: 'false', vw: 22 },
  { n: 'Gradient (2nd fill)', nw: 79, v: 'Red: 192; Green: 192; Blue: 192;', vw: 158, c: '#c5c3c8' },
  { n: 'Gradient direction', nw: 82, v: '0', vw: 6 },
  { n: 'Shadow casting e', nw: 81, v: 'false', vw: 22 },
  { n: 'Shadow color', nw: 65, v: 'Red: 192; Green: 192; Blue: 192;', vw: 158, c: '#c5c3c8' },
  { n: 'Shadow thickn', nw: 71, v: '0', vw: 6 },
];
const HelpBox = styled.div`
  flex: 1;
  margin-top: 9px;
  border: 1px solid #aca899;
  border-right-color: #fff;
  border-bottom-color: #fff;
`;

/* ---------- status and task bars ---------- */

const StatusBar = styled.div`
  height: 18px;
  flex: none;
  display: flex;
  align-items: center;
  padding: 1px 3px 0 29px;
  background: linear-gradient(90deg, #e5e8d5 25px, transparent 25px), linear-gradient(#dedbca, #f1eddf 30%, #efebdd 75%, #dcd9b8);
`;
const StatusItem = styled.div<{ $last?: boolean }>`
  display: flex;
  padding: 0 ${p => (p.$last ? 0 : 1)}px 0 4px;
  border-right: ${p => (p.$last ? 0 : 1)}px solid #d0ccbb;
`;
const STATUS: [string, number][] = [['CAP', 20], ['NUM', 26], ['SCRL', 26], ['EDIT', 22], ['100%', 27], ['PICML', 31], ['09:14  PM', 50]];

const TaskBar = styled.div`
  height: 30px;
  flex: none;
  display: flex;
  align-items: center;
  color: #fff;
  background: linear-gradient(#1f4fc0 0, #4c8df6 2px, #2a66e2 5px, #245edc 22px, #2058cf 26px, #1a45a8 30px);
`;
const Start = styled.div`
  width: 96px;
  height: 30px;
  flex: none;
  display: flex;
  align-items: center;
  gap: 4px;
  padding-left: 11px;
  border-radius: 0 10px 12px 0;
  font-style: italic;
  text-shadow: 1px 1px 1px #1c4a1a;
  background: linear-gradient(#2f7a2f 0, #5fb45f 3px, #3c9a3c 8px, #389338 20px, #2f7d2f 27px, #256325 30px);
  box-shadow: inset -3px 0 4px #2a6b2a, 2px 0 3px #1a46ae;
`;
const Quick = styled.div`
  width: 102px;
  flex: none;
  display: flex;
  gap: 7px;
  padding-left: 12px;
  align-items: center;
`;
const More = styled.svg`margin: 0 0 10px 5px;`;
const Task = styled.div<{ $on?: boolean }>`
  width: 158px;
  height: 24px;
  margin: 1px 2px 0 0;
  flex: none;
  display: flex;
  align-items: center;
  gap: 4px;
  padding: 0 0 2px 9px;
  border-radius: 3px;
  border: 1px solid ${p => (p.$on ? '#153e96' : '#4d8ef8')};
  background: ${p => (p.$on ? '#1b50b8' : 'linear-gradient(#5494fa, #3b80f3 5px, #3a7df0 18px, #3170e2)')};
`;
const Tray = styled.div`
  position: relative;
  width: 74px;
  height: 30px;
  margin-left: auto;
  display: flex;
  align-items: center;
  padding-left: 16px;
  border-left: 1px solid #0d5bb8;
  background: linear-gradient(#0d78d8 0, #28b2f8 2px, #169bee 6px, #129aec 22px, #0e80d4 30px);
`;
const TrayKnob = styled.div`
  position: absolute;
  left: -10px;
  top: 6px;
  width: 18px;
  height: 18px;
  border-radius: 50%;
  border: 1px solid #9fd4fb;
  display: flex;
  align-items: center;
  justify-content: center;
  background: radial-gradient(circle at 35% 30%, #59b8f8, #0b6dd0);
`;
const TASKS: { icon: string; t: string; w: number; on?: boolean }[] = [
  { icon: 'cmd', t: 'Visual Studio 2008 Co...', w: 116 },
  { icon: 'cmd', t: 'Visual Studio 2008 Co...', w: 116 },
  { icon: 'vs', t: '03.html* - Microsoft ...', w: 111 },
  { icon: 'vs', t: 'cosmic - Microsoft Vis...', w: 114 },
  { icon: 'search', t: 'Desktop', w: 40 },
  { icon: 'app', t: 'PICML - StockBroker -...', w: 116, on: true },
  { icon: 'fox', t: 'Getting Started - Moz...', w: 116 },
];

const ArrowLayer = styled.svg`
  position: absolute;
  left: 380px;
  top: 220px;
  filter: drop-shadow(1px 2px 1.5px rgba(0, 0, 0, 0.4));
`;

const DOCS = [
  { t: 'StockBroker', w: 62, tw: 85, over: 0, pad: 19, c: '#eaf1ff', c2: '#c3d4f4' },
  { t: 'Stock_StockBrokerArtifacts', w: 137, tw: 165, over: 12, pad: 22, c: '#fff2a6', c2: '#f7dc62' },
  { t: 'Stock_StockBrokerImpl', w: 117, tw: 144, over: 12, pad: 21, c: '#dbe6bd', c2: '#bfd096' },
  { t: 'StockQuoterImplementation', w: 146, tw: 172, over: 12, pad: 21, c: '#fbb9b8', c2: '#f19090' },
  { t: 'StockQuot...', w: 64, tw: 90, over: 12, pad: 22, c: '#d9c6f2', c2: '#bfa2e2' },
];

function PartPanel() {
  return (
    <PartWrap>
      <CaptionBar text="Part Browser" w={66} pr={5} />
      <PartBody>
        <TabRow $pl={2}>
          <PageTab $w={106}><Sys w={96}>ComponentInterface</Sys></PageTab>
          <PageTab $w={174} $on><Sys w={159}>ComponentImplementationAspect</Sys></PageTab>
        </TabRow>
        <PartPage>
          <PartList>
            <Node $x={22} $y={9}>
              <svg width="47" height="47">
                <defs>
                  <linearGradient id="leaf" x1="0" y1="0" x2="1" y2="1"><stop offset="0" stopColor="#8fc07c" /><stop offset="1" stopColor="#e4f2dc" /></linearGradient>
                  <radialGradient id="ball" cx=".35" cy=".3" r=".8"><stop offset="0" stopColor="#cfe8c2" /><stop offset="1" stopColor="#2c6320" /></radialGradient>
                </defs>
                <rect width="47" height="47" fill="#7fae6c" />
                <path d="M0 0h47L41 6H6v35l-6 6z" fill="#6fa05a" />
                <path d="M47 47H0l6-6h35V6l6-6z" fill="#a2c892" />
                <rect x="6" y="6" width="35" height="35" fill="url(#leaf)" />
                <path d="M17 33.5A13 13 0 1 1 35 24M16 36l2.5-3 4.5 2-5 2.500" fill="none" stroke="#3b6b2d" strokeWidth="1.5" />
                <circle cx="32" cy="31" r="6" fill="url(#ball)" />
              </svg>
              <Label font={sans} size={13} w={147} color="#000">ComponentInstanceType</Label>
            </Node>
          </PartList>
        </PartPage>
      </PartBody>
      <BottomTabs>
        <BottomTab><Label w={42}>Console</Label></BottomTab>
        <BottomTab $on><Label w={65}>Part Browser</Label></BottomTab>
        <BottomTab><Label w={90}>Panning Window</Label></BottomTab>
        <TabSep $w={13} />
        <BottomTab><Label w={34}>Search</Label></BottomTab>
      </BottomTabs>
    </PartWrap>
  );
}

export default function App() {
  return (
    <Desktop>
      <Global />
      <Win>
        <TitleBar>
          <Icon name="app" />
          <Label w={501} size={12} bold>PICML - StockBroker - /Quoter/ComponentImplementations/StockQuoterImplemen</Label>
          <Spring />
          <WinButton><svg width="12" height="12"><path d="M1 9.5h7" stroke="#fff" strokeWidth="3" /></svg></WinButton>
          <WinButton><svg width="12" height="12"><path d="M4 4V1.5h7V7H8.5M1.5 5h6v5.5h-6z" fill="none" stroke="#fff" strokeWidth="1.6" /></svg></WinButton>
          <WinButton $close><svg width="12" height="12"><path d="M1 1l10 10M11 1L1 11" stroke="#fff" strokeWidth="2.2" /></svg></WinButton>
          <MacBar>
            <Light $c="#ff8a8a" $d="#b01018" /><Light $c="#ffd870" $d="#c87810" /><Light $c="#b8f080" $d="#3a8a18" />
            <MacMenus>
              <Label w={32} size={12} bold color="#e6e6e6">View</Label>
              <Label w={104} size={12} bold color="#e6e6e6">Virtual Machine</Label>
              <Label w={53} size={12} bold color="#e6e6e6">Window</Label>
            </MacMenus>
            <svg width="15" height="15"><circle cx="7.5" cy="7.5" r="6.3" fill="#222" stroke="#ddd" /><path d="M6 4.5v6M9 4.5v6" stroke="#fff" strokeWidth="1.6" /></svg>
          </MacBar>
        </TitleBar>

        <MenuBar>
          <Grip $w={8} />
          <MenuItem $gap={6}><Label w={18}>File</Label></MenuItem>
          <MenuItem $gap={15}><Label w={20}>Edit</Label></MenuItem>
          <MenuItem $gap={15}><Label w={25}>View</Label></MenuItem>
          <MenuItem $gap={15}><Label w={27}>Tools</Label></MenuItem>
          <MenuItem $gap={15}><Label w={44}>Window</Label></MenuItem>
          <MenuItem $gap={15}><Label w={24}>Help</Label></MenuItem>
        </MenuBar>

        <ToolRow>
          {BANDS.map((b, i) => (
            <Band key={i}>
              <Grip $w={b.grip} />
              {b.items.map((it, k) => (typeof it === 'number' ? <Sep key={k} $w={it} /> : <Cell key={k}><Icon name={it} /></Cell>))}
              {b.more && <Chevron />}
            </Band>
          ))}
        </ToolRow>

        <Body>
          <SideBar>
            <SideStrip>
              <SideGrip $h={10} />
              {SIDE1.map((n, i) => <SideCell key={n} $on={i === 0}><Icon name={n} /></SideCell>)}
              <SideGrip $h={11} />
              {SIDE2.map(n => <SideCell key={n}><Icon name={n} size={15} /></SideCell>)}
            </SideStrip>
          </SideBar>

          <Main>
            <DocTabs>
              {DOCS.map((d, i) => (
                <DocTab key={d.t} $w={d.tw} $c={d.c} $c2={d.c2} $z={5 - i} $over={d.over} $pad={d.pad}>
                  <Label w={d.w} color="#3a3226">{d.t}</Label>
                </DocTab>
              ))}
              <DocTab $w={101} $c="#b4d9cd" $c2="#93c3b4" $z={6} $over={8} $pad={18}>
                <Label w={63} bold color="#1c2a26">StockBroker</Label>
                <TabClose><Close /></TabClose>
              </DocTab>
              <DocMenu><Down /></DocMenu>
            </DocTabs>
            <Doc>
              <NameRow>
                <Icon name="bigT" size={13} /><Gap $w={5} />
                <Sys w={31}>Name:</Sys>
                <Field $w={102} $ml={2}><Sys w={60}>StockBroker</Sys></Field>
                <Field $w={102} $ml={3} $ro><Sys w={96}>ComponentInstance</Sys></Field>
                <Gap $w={3} /><Sys w={36}>Aspect:</Sys>
                <Field $w={98} $ml={3}><Sys w={75}>Component Imp</Sys><Drop><Vee /></Drop></Field>
                <Gap $w={4} /><Sys w={27}>Base:</Sys>
                <Field $w={102} $ml={4} $ro><Sys w={21}>N/A</Sys></Field>
                <Gap $w={5} /><Sys w={31}>Zoom:</Sys>
                <Field $w={61} $ml={3}><Sys w={26}>100%</Sys><Drop><Vee /></Drop></Field>
              </NameRow>
              <Canvas>
                <Node $x={266} $y={200}>
                  <svg width="36" height="36">
                    <rect x="1" y="1" width="34" height="34" fill="#fff" stroke="#000" strokeWidth="2" />
                    <rect x="3" y="4" width="23" height="21" fill="#eaf6fd" />
                    <rect x="3" y="3" width="23" height="4" fill="#2f7ad8" />
                    <path d="M3 24.5h8" stroke="#3a80d0" strokeWidth="1.5" />
                    <circle cx="21" cy="20" r="11.8" fill="#d6dbf4" stroke="#a3aedc" />
                    <path d="M21 20L13 12a11 11 0 0 1 8-3zM21 20l8 8a11 11 0 0 1-8 3z" fill="#f3f5ff" />
                    <circle cx="21" cy="20" r="3" fill="#f6f8ff" stroke="#a3aedc" />
                  </svg>
                  <Label font={sans} size={13} w={141} color="#000">Stock_StockBrokerImpl</Label>
                </Node>
              </Canvas>
            </Doc>
            <PartPanel />
          </Main>

          <Right>
            <CaptionBar text="GME Browser" w={69} />
            <TabRow $pl={0}>
              <PageTab $w={64} $on><Sys w={50}>Aggregate</Sys></PageTab>
              <PageTab $w={63}><Sys w={53}>Inheritance</Sys></PageTab>
              <Gap $w={1} />
              <PageTab $w={39}><Sys w={25}>Meta</Sys></PageTab>
            </TabRow>
            <BrowserPage>
              <Field $w={514} $h={21}><Sys w={113}>Stock_StockBrokerImpl</Sys><Drop><Vee /></Drop></Field>
              <Tree>
                {TREE.map((n, i) => (
                  <TreeRow key={i}>
                    {n.lines.split('').map((l, k, all) => {
                      const own = k === all.length - 1;
                      return (
                        <Guide key={k} $v={l === 's' ? 'none' : l === 'e' ? 'half' : 'full'} $h={own}>
                          {own && n.exp && <PlusMinus plus={n.exp === '+'} />}
                        </Guide>
                      );
                    })}
                    <Guide><Icon name={n.icon} size={15} /></Guide>
                    <TreeText $sel={n.sel}><Sys w={n.w}>{n.t}</Sys></TreeText>
                  </TreeRow>
                ))}
              </Tree>
            </BrowserPage>

            <CaptionBar text="Object Inspector" w={86} />
            <Inspector>
              <InspectorTop>
                <Field $w={446} $h={23}><Sys w={113}>Stock_StockBrokerImpl</Sys></Field>
                <CheckBox /><Sys w={37}>for Kind</Sys>
              </InspectorTop>
              <TabRow $pl={2}>
                <PageTab $w={54}><Sys w={45}>Attributes</Sys></PageTab>
                <PageTab $w={72} $on><Sys w={57}>Preferences</Sys></PageTab>
                <PageTab $w={56}><Sys w={48}>Properties</Sys></PageTab>
              </TabRow>
              <GridPage>
                <Grid>
                  <GridRows>
                    <GridRow $head>
                      <GridCell><HeadBox /></GridCell>
                      <GridCell><Sys w={83} size={12} bold>General Prefer</Sys></GridCell>
                      <GridCell />
                    </GridRow>
                    {PROPS.map(p => (
                      <GridRow key={p.n}>
                        <GridCell />
                        <GridCell><Sys w={p.nw} color="#aca899">{p.n}</Sys></GridCell>
                        <GridCell>{p.c && <Swatch $c={p.c} />}<Sys w={p.vw} color="#aca899">{p.v}</Sys></GridCell>
                      </GridRow>
                    ))}
                  </GridRows>
                  <ScrollBar>
                    <ScrollButton $h={16}><Vee up /></ScrollButton>
                    <ScrollButton $h={34}><svg width="7" height="8"><path d="M0 .5h7M0 2.5h7M0 4.5h7M0 6.5h7" stroke="#8fa9e8" /></svg></ScrollButton>
                    <Spring />
                    <ScrollButton $h={16}><Vee /></ScrollButton>
                  </ScrollBar>
                </Grid>
              </GridPage>
              <HelpBox />
            </Inspector>
          </Right>
        </Body>

        <StatusBar>
          <Label w={31}>Ready</Label>
          <Spring />
          {STATUS.map(([t, w], i) => (
            <StatusItem key={t} $last={i === STATUS.length - 1}><Label w={w} color="#b0ac9c">{t}</Label></StatusItem>
          ))}
        </StatusBar>

        <TaskBar>
          <Start><Icon name="windows" size={20} /><Label w={38} size={17} bold>start</Label></Start>
          <Quick>
            <Icon name="ie" /><Icon name="fox" /><Icon name="search" />
            <More width="9" height="6"><path d="M1 0l3 2.5L1 5M5 0l3 2.5L5 5" fill="none" stroke="#cfe0ff" /></More>
          </Quick>
          {TASKS.map((t, i) => (
            <Task key={i} $on={t.on}><Icon name={t.icon} size={15} /><Label w={t.w}>{t.t}</Label></Task>
          ))}
          <Tray>
            <TrayKnob><svg width="7" height="8"><path d="M5.5 1L2 4l3.5 3" fill="none" stroke="#fff" strokeWidth="2" /></svg></TrayKnob>
            <Label w={40}>9:14 PM</Label>
          </Tray>
        </TaskBar>
      </Win>

      <ArrowLayer width="640" height="140">
        <path d="M14 121L595 22.9" stroke="#000" strokeWidth="4" strokeDasharray="16.2 11.8" />
        <path d="M594 23l22-3.7M601 14.5l16.5 4.6L604 30" fill="none" stroke="#000" strokeWidth="4" />
      </ArrowLayer>
    </Desktop>
  );
}
